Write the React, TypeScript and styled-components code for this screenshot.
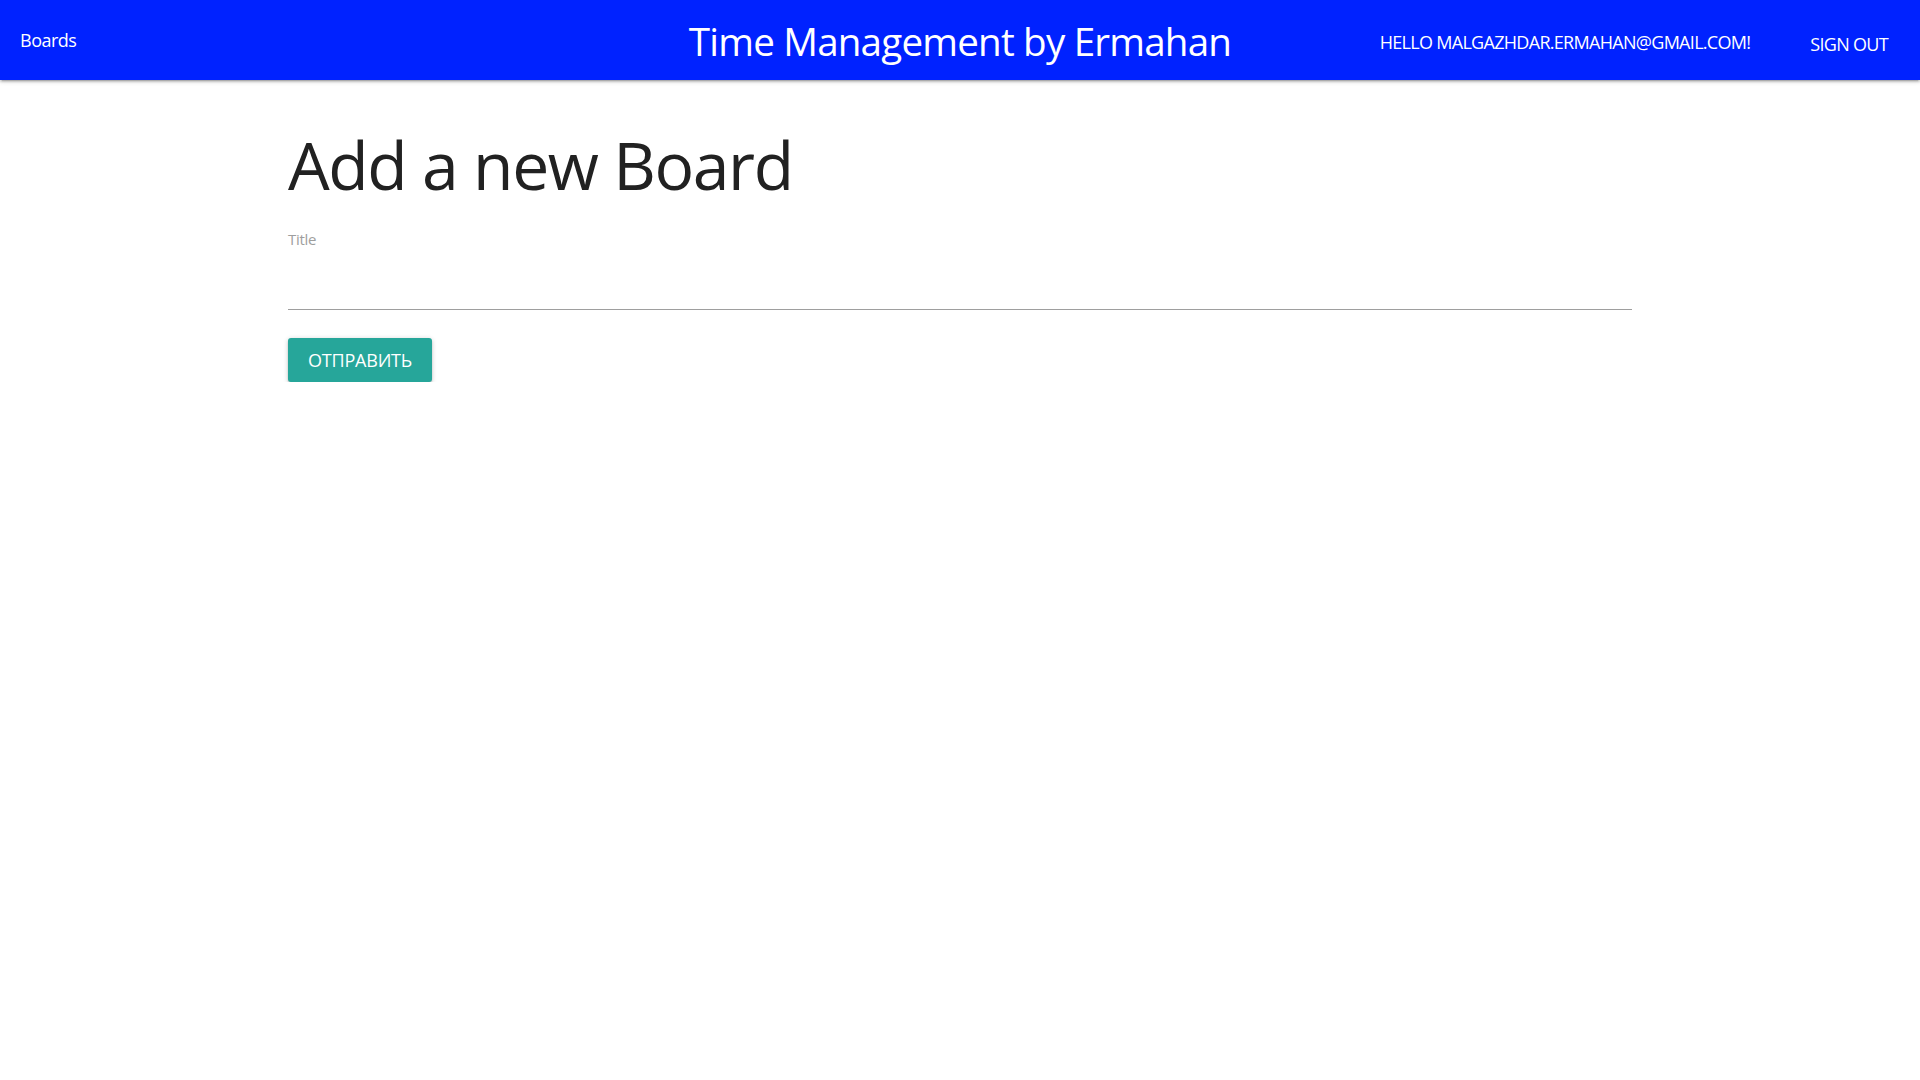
import React from 'react';
import styled, { createGlobalStyle } from 'styled-components';

const GlobalStyle = createGlobalStyle`
  html, body {
    margin: 0;
    padding: 0;
    background: #ffffff;
    font-family: "Open Sans", "Noto Sans", sans-serif;
    color: rgba(0, 0, 0, 0.87);
  }
`;

const colors = {
  nav: '#0022ff',
  text: '#ffffff',
  heading: '#212121',
  muted: '#9e9e9e',
  teal: '#26a69a',
};

const Nav = styled.nav`
  display: grid;
  grid-template-columns: 1fr auto 1fr;
  align-items: center;
  height: 80px;
  padding: 0 20px;
  background-color: ${colors.nav};
  color: ${colors.text};
  box-shadow: 0 2px 2px 0 rgba(0, 0, 0, 0.14), 0 3px 1px -2px rgba(0, 0, 0, 0.12),
    0 1px 5px 0 rgba(0, 0, 0, 0.2);
  position: relative;
  z-index: 1;
`;

const NavLink = styled.a<{ $upper?: boolean; $shift?: number }>`
  color: ${colors.text};
  text-decoration: none;
  font-size: 18px;
  letter-spacing: ${p => (p.$upper ? '-0.7px' : '-0.5px')};
  text-transform: ${p => (p.$upper ? 'uppercase' : 'none')};
  position: relative;
  top: ${p => p.$shift ?? 0}px;
  cursor: pointer;
  white-space: nowrap;
`;

const Brand = styled.a`
  color: ${colors.text};
  text-decoration: none;
  font-size: 38.6px;
  letter-spacing: -0.8px;
  position: relative;
  top: 1px;
  white-space: nowrap;
`;

const RightMenu = styled.ul`
  display: flex;
  justify-content: flex-end;
  align-items: center;
  gap: 60px;
  margin: 0;
  padding: 0 12px 0 0;
  list-style: none;
`;

const Container = styled.main`
  width: 70%;
  margin: 0 auto;
  padding-top: 51px;
`;

const Heading = styled.h1`
  margin: 0;
  font-size: 66px;
  line-height: 66px;
  font-weight: 400;
  letter-spacing: -1.4px;
  color: ${colors.heading};
`;

const Form = styled.form`
  display: flex;
  flex-direction: column;
  align-items: flex-start;
  margin-top: 35px;
`;

const Label = styled.label`
  font-size: 15px;
  line-height: 15px;
  letter-spacing: -0.3px;
  color: ${colors.muted};
`;

const Input = styled.input`
  box-sizing: border-box;
  width: 100%;
  height: 63px;
  margin: 0;
  padding: 0;
  border: none;
  border-bottom: 1px solid ${colors.muted};
  outline: none;
  background: transparent;
  font: inherit;
  font-size: 20px;
`;

const SubmitButton = styled.button`
  box-sizing: border-box;
  width: 144px;
  height: 44px;
  margin-top: 28px;
  padding: 0;
  border: none;
  border-radius: 3px;
  background-color: ${colors.teal};
  color: #ffffff;
  font-family: inherit;
  font-size: 18px;
  letter-spacing: -0.2px;
  text-transform: uppercase;
  cursor: pointer;
  box-shadow: 0 2px 2px 0 rgba(0, 0, 0, 0.14), 0 3px 1px -2px rgba(0, 0, 0, 0.12),
    0 1px 5px 0 rgba(0, 0, 0, 0.2);
`;

export default function App() {
  return (
    <>
      <GlobalStyle />
      <Nav>
        <div>
          <NavLink>Boards</NavLink>
        </div>
        <Brand>Time Management by Ermahan</Brand>
        <RightMenu>
          <li>
            <NavLink $upper $shift={2}>Hello malgazhdar.ermahan@gmail.com!</NavLink>
          </li>
          <li>
            <NavLink $upper $shift={4}>Sign out</NavLink>
          </li>
        </RightMenu>
      </Nav>
      <Container>
        <Heading>Add a new Board</Heading>
        <Form onSubmit={e => e.preventDefault()}>
          <Label htmlFor="title">Title</Label>
          <Input id="title" type="text" />
          <SubmitButton type="submit">Отправить</SubmitButton>
        </Form>
      </Container>
    </>
  );
}
